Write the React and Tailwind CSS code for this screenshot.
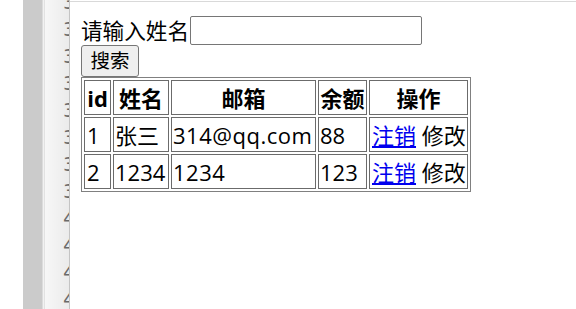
import React from "react";

const gutterNums = ["30","31","32","33","34","35","36","37","40","41","42","43"];

export default function App() {
  const font = { fontFamily: '"Open Sans","Noto Sans CJK SC",sans-serif' };
  return (
    <div className="flex h-[309px] w-[576px] overflow-hidden bg-white" style={font}>
      <div className="w-[23px] shrink-0 bg-white" />
      <div className="w-[19px] shrink-0 bg-[#cbcbcb]" />
      <div className="w-[1px] shrink-0 bg-[#dcdcdc]" />
      <div className="w-[1px] shrink-0 bg-[#f2f2f2]" />
      <div className="w-[1px] shrink-0 bg-[#e2e2e2]" />
      <div className="relative w-[25px] shrink-0 overflow-hidden border-r border-[#c4c4c4] bg-gradient-to-r from-[#f7f7f7] to-[#ebebeb]">
        <div className="mt-[-11px] flex flex-col">
          {gutterNums.map((n) => (
            <div key={n} className="h-[27px] whitespace-nowrap pl-[18px] text-[20px] leading-[27px] text-[#6a6a6a]" style={{ fontFamily: '"DejaVu Sans",sans-serif' }}>
              {n}
            </div>
          ))}
        </div>
      </div>
      <div className="flex min-w-0 flex-1 flex-col">
        <div className="mt-[1px] h-[1px] bg-[#d9d9d9]" />
        <div className="flex flex-col pl-[11px] pt-[14px] text-black">
          <div className="flex h-[29px] items-center">
            <span className="w-[109px] whitespace-nowrap text-[21.6px] leading-none">请输入姓名</span>
            <div className="h-[29px] w-[232px] rounded-[2px] border border-[#767676] bg-white" />
          </div>
          <div className="flex">
            <button className="h-[32px] w-[58px] rounded-[3px] border border-[#767676] bg-[#efefef] text-[19.5px] leading-none text-black">
              搜索
            </button>
          </div>
          <table className="w-[390px] table-fixed border-separate border-spacing-[2px] border border-[#808080] text-[22px] leading-none">
            <thead>
              <tr>
                <th className="h-[35px] w-[27px] border border-[#6b6b6b] p-0 text-center font-bold">id</th>
                <th className="h-[35px] w-[56px] border border-[#6b6b6b] p-0 text-center font-bold">姓名</th>
                <th className="h-[35px] w-[145px] border border-[#6b6b6b] p-0 text-center font-bold">邮箱</th>
                <th className="h-[35px] w-[49px] border border-[#6b6b6b] p-0 text-center font-bold">余额</th>
                <th className="h-[35px] w-[99px] border border-[#6b6b6b] p-0 text-center font-bold">操作</th>
              </tr>
            </thead>
            <tbody>
              {[
                ["1", "张三", "314@qq.com", "88"],
                ["2", "1234", "1234", "123"],
              ].map((r) => (
                <tr key={r[0]}>
                  <td className="h-[35px] whitespace-nowrap border border-[#6b6b6b] px-[2px] py-0">{r[0]}</td>
                  <td className="h-[35px] whitespace-nowrap border border-[#6b6b6b] px-[1px] py-0">{r[1]}</td>
                  <td className="h-[35px] whitespace-nowrap border border-[#6b6b6b] px-[1px] py-0 tracking-[0.5px]">{r[2]}</td>
                  <td className="h-[35px] whitespace-nowrap border border-[#6b6b6b] px-[1px] py-0">{r[3]}</td>
                  <td className="h-[35px] whitespace-nowrap border border-[#6b6b6b] px-[2px] py-0">
                    <a href="#" className="text-[#0000ee] underline">注销</a> 修改
                  </td>
                </tr>
              ))}
            </tbody>
          </table>
        </div>
      </div>
    </div>
  );
}
